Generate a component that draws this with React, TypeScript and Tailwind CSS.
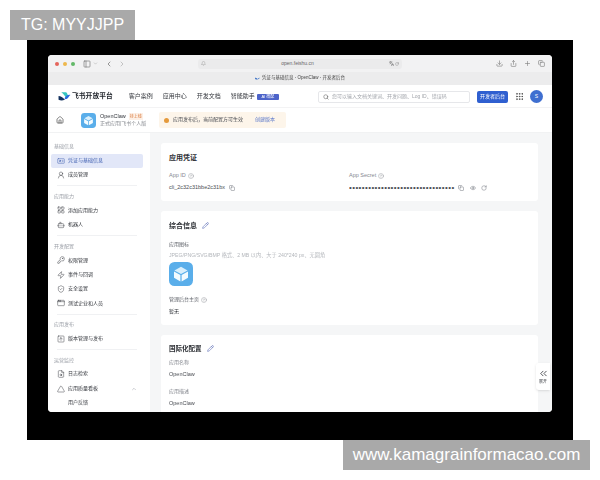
import React from 'react'
import {
  AppWindow, Bell, Bot, ChevronDown, ChevronLeft, ChevronRight, ChevronUp, ChevronsLeft, CircleHelp,
  Copy, Eye, FileSearch, Grip, House, IdCard, KeyRound, LayoutGrid, PanelLeft, Pencil, Plus,
  RotateCw, Search, Share, ShieldCheck, SquareArrowUp, Triangle, UserRound, Download, Languages, Zap,
} from 'lucide-react'

const font = "font-['Liberation_Sans','Noto_Sans_CJK_SC',sans-serif]"

type SideItem = { label: string; icon?: React.ElementType; active?: boolean; chevron?: boolean }
type SideGroup = { title: string; items: SideItem[] }

const groups: SideGroup[] = [
  { title: '基础信息', items: [{ label: '凭证与基础信息', icon: IdCard, active: true }, { label: '成员管理', icon: UserRound }] },
  { title: '应用能力', items: [{ label: '添加应用能力', icon: LayoutGrid }, { label: '机器人', icon: Bot }] },
  {
    title: '开发配置',
    items: [
      { label: '权限管理', icon: KeyRound },
      { label: '事件与回调', icon: Zap },
      { label: '安全设置', icon: ShieldCheck },
      { label: '测试企业和人员', icon: AppWindow },
    ],
  },
  { title: '应用发布', items: [{ label: '版本管理与发布', icon: SquareArrowUp }] },
  {
    title: '运营监控',
    items: [
      { label: '日志检索', icon: FileSearch },
      { label: '应用质量看板', icon: Triangle, chevron: true },
      { label: '用户反馈' },
    ],
  },
]

const Cube = ({ size }: { size: number }) => (
  <svg width={size} height={size} viewBox="0 0 24 24" className="block">
    <rect width="24" height="24" rx="5.5" fill="#5aaeea" />
    <path d="M12 4.8 18.6 8.4 12 12 5.4 8.4Z" fill="#d9effc" />
    <path d="M5 9.4 11.4 13v6.4L5 15.8Z" fill="#f4fbff" />
    <path d="M19 9.4 12.6 13v6.4l6.4-3.6Z" fill="#f4fbff" />
  </svg>
)

const Logo = () => (
  <svg width="13" height="11" viewBox="0 0 24 20" className="block shrink-0">
    <path d="M1 9c4 0 8 3 11 6 2-1 4-3 5-5-3 7-10 9-16 6Z" fill="#12315f" />
    <path d="M6 2h9c2 2 3 4 3.500 7-1 1-2 3-3.500 4C13 9 10 5 6 2Z" fill="#35c6c0" />
    <path d="M12 13c3-5 7-7 11-6-2 1-3 3-4 5-2 3-5 4-7 1Z" fill="#2a6be0" />
  </svg>
)

function Sidebar() {
  return (
    <aside className="w-[102px] shrink-0 bg-white pl-[3px] pr-[7px] pt-[9px] flex flex-col overflow-hidden">
      {groups.map((g, i) => (
        <div key={g.title} className="shrink-0">
          {i > 0 && <div className="h-px bg-[#f0f1f3] mx-[6px] mt-[3px] mb-[5.500px]" />}
          <div className="h-[8px] leading-[8px] pl-[3px] mb-[3.500px] text-[5px] text-[#9a9ea6]">{g.title}</div>
          {g.items.map(item => {
            const Icon = item.icon
            return (
              <div
                key={item.label}
                className={`h-[14.400px] flex items-center pl-[6px] pr-[6px] gap-[3px] text-[5px] ${
                  item.active ? 'bg-[#e2e7f8] text-[#3f5fb0] rounded-[2px]' : 'text-[#33363c]'
                }`}
              >
                {Icon ? <Icon size={8} strokeWidth={1.400} className="shrink-0" /> : <span className="w-[8px] shrink-0" />}
                <span className="flex-1 whitespace-nowrap">{item.label}</span>
                {item.chevron && <ChevronUp size={6} className="text-[#9a9ea6]" />}
              </div>
            )
          })}
        </div>
      ))}
    </aside>
  )
}

function Help() {
  return <CircleHelp size={6} strokeWidth={1.400} className="text-[#777b83] shrink-0" />
}

function Content() {
  return (
    <main className="flex-1 bg-[#f5f6f7] pl-[11px] pr-[14px] pt-[10px] flex flex-col gap-[10px] overflow-hidden">
      <section className="h-[58px] shrink-0 bg-white rounded-[3px] pl-[8px] pt-[10px]">
        <h2 className="text-[7px] leading-[9px] font-bold text-[#2b2e33]">应用凭证</h2>
        <div className="flex mt-[10px]">
          <div className="w-[180px]">
            <div className="flex items-center gap-[2px] text-[5.500px] leading-[7px] text-[#85888f]">App ID <Help /></div>
            <div className="flex items-center gap-[4px] mt-[5px] text-[5.500px] leading-[7px] text-[#4a4d53]">
              cli_2c32c31bbe2c31bx <Copy size={6} className="text-[#777b83]" />
            </div>
          </div>
          <div>
            <div className="flex items-center gap-[2px] text-[5.500px] leading-[7px] text-[#85888f]">App Secret <Help /></div>
            <div className="flex items-center mt-[5px] h-[7px] text-[#4a4d53]">
              <span className="w-[106px] overflow-hidden whitespace-nowrap text-[8px] leading-[7px] tracking-[0.400px]">
                •••••••••••••••••••••••••••••••••
              </span>
              <Copy size={6} className="text-[#777b83] ml-[3px]" />
              <Eye size={6} className="text-[#777b83] ml-[6px]" />
              <RotateCw size={6} className="text-[#777b83] ml-[5px]" />
            </div>
          </div>
        </div>
      </section>

      <section className="h-[114px] shrink-0 bg-white rounded-[3px] pl-[8px] pt-[10px]">
        <div className="flex items-center gap-[5px]">
          <h2 className="text-[7px] leading-[9px] font-bold text-[#2b2e33]">综合信息</h2>
          <Pencil size={7} className="text-[#5a6bb5]" />
        </div>
        <div className="text-[5px] leading-[7px] text-[#5f6269] mt-[11px]">应用图标</div>
        <div className="text-[5.200px] leading-[7px] text-[#b3b6bb] mt-[4px] whitespace-nowrap">
          JPEG/PNG/SVG/BMP 格式、2 MB 以内、大于 240*240 px、无圆角
        </div>
        <div className="mt-[3px]"><Cube size={24} /></div>
        <div className="flex items-center gap-[2px] text-[5px] leading-[7px] text-[#5f6269] mt-[10px]">管理后台主页 <Help /></div>
        <div className="text-[5px] leading-[7px] text-[#33363c] mt-[5px]">暂无</div>
      </section>

      <section className="flex-1 min-h-0 bg-white rounded-t-[3px] pl-[8px] pt-[9px] overflow-hidden">
        <div className="flex items-center gap-[5px]">
          <h2 className="text-[6.500px] leading-[9px] font-bold text-[#2b2e33]">国际化配置</h2>
          <Pencil size={7} className="text-[#5a6bb5]" />
        </div>
        <div className="text-[5px] leading-[7px] text-[#85888f] mt-[6px]">应用名称</div>
        <div className="text-[5.500px] leading-[7px] text-[#4a4d53] mt-[5px]">OpenClaw</div>
        <div className="text-[5px] leading-[7px] text-[#85888f] mt-[9.500px]">应用描述</div>
        <div className="text-[5.500px] leading-[7px] text-[#4a4d53] mt-[5px]">OpenClaw</div>
      </section>
    </main>
  )
}

export default function App() {
  return (
    <div className={`relative w-[600px] h-[480px] bg-white overflow-hidden ${font}`}>
      <div className="absolute left-[10px] top-[10px] w-[125px] h-[30px] z-10 bg-[#a9a9a9] text-white text-[16px] flex items-center justify-center">
        TG: MYYJJPP
      </div>
      <div className="absolute left-[343px] top-[440px] w-[247px] h-[30px] z-10 bg-[#a9a9a9] text-white text-[17px] flex items-center justify-center whitespace-nowrap">
        www.kamagrainformacao.com
      </div>

      <div className="pt-[40px] pl-[27px]">
        <div className="w-[546px] h-[400px] bg-black pt-[15px] pl-[21px]">
          <div className="relative w-[504px] h-[357px] rounded-[4px] overflow-hidden bg-white flex flex-col blur-[0.4px]">
            {/* browser chrome */}
            <div className="h-[17px] bg-[#f2f2f3] flex items-center pl-[7px] pr-[7px] shrink-0">
              <span className="w-[4px] h-[4px] rounded-full bg-[#e5655c]" />
              <span className="w-[4px] h-[4px] rounded-full bg-[#eeb84c] ml-[4px]" />
              <span className="w-[4px] h-[4px] rounded-full bg-[#62b968] ml-[4px]" />
              <PanelLeft size={8} className="text-[#777] ml-[8px]" />
              <ChevronDown size={5} className="text-[#999] ml-[2px]" />
              <ChevronLeft size={8} className="text-[#666] ml-[7px]" />
              <ChevronRight size={8} className="text-[#aaa] ml-[5px]" />
              <div className="w-[204px] h-[10px] ml-[72px] rounded-[3px] bg-[#ebebec] flex items-center px-[3px] text-[5px] text-[#666] shrink-0">
                <Bell size={5} className="text-[#999]" />
                <span className="flex-1 text-center">open.feishu.cn</span>
                <Languages size={5} className="text-[#555]" />
                <RotateCw size={4} className="text-[#777] ml-[1px]" />
              </div>
              <div className="flex-1 flex justify-end items-center gap-[7px] text-[#777]">
                <Download size={7} />
                <Share size={7} />
                <Plus size={7} />
                <Copy size={7} />
              </div>
            </div>
            <div className="h-[13px] bg-[#ececed] flex items-center justify-center gap-[2px] text-[4.500px] text-[#444] shrink-0">
              <span className="w-[5px] h-[5px] shrink-0"><svg viewBox="0 0 24 20" className="block"><path d="M1 9c4 0 8 3 11 6 4-2 7-6 11-8-2 6-8 12-22 9Z" fill="#1f5fc0" /></svg></span>
              凭证与基础信息 - OpenClaw - 开发者后台
            </div>

            {/* site header */}
            <div className="h-[23px] flex items-center pl-[10px] pr-[9px] pt-[1px] border-b border-[#f3f3f4] shrink-0">
              <Logo />
              <span className="ml-[1px] text-[6.800px] font-bold text-[#20242b] whitespace-nowrap">飞书开放平台</span>
              <nav className="flex items-center gap-[10px] ml-[16px] text-[6px] text-[#33363c] whitespace-nowrap">
                <span>客户案例</span>
                <span>应用中心</span>
                <span>开发文档</span>
                <span className="flex items-center gap-[2px]">
                  智能助手
                  <span className="w-[22px] text-center bg-[#4c63c9] text-white text-[4px] leading-[6px] rounded-[1px]">AI 搭配</span>
                </span>
              </nav>
              <div className="ml-auto w-[152px] h-[12px] border border-[#e6e7ea] rounded-[2px] flex items-center px-[4px] gap-[3px] shrink-0">
                <Search size={6} className="text-[#555]" />
                <span className="text-[5px] text-[#a3a6ac] whitespace-nowrap">您可以输入文档关键词、开发问题、Log ID、错误码</span>
              </div>
              <button className="ml-[7px] w-[31px] h-[12px] rounded-[2px] bg-[#2f5fd0] text-white text-[5px] shrink-0">开发者后台</button>
              <Grip size={9} className="ml-[7px] text-[#444] shrink-0" />
              <span className="ml-[6px] w-[13px] h-[13px] rounded-full bg-[#3f6fd0] text-white text-[5px] flex items-center justify-center shrink-0">S</span>
            </div>

            {/* app bar */}
            <div className="h-[25px] flex items-center pl-[8px] border-b border-[#f1f2f3] shrink-0">
              <House size={8} className="text-[#444]" />
              <div className="ml-[17px]"><Cube size={15} /></div>
              <div className="ml-[4px] w-[45px]">
                <div className="flex items-center gap-[3px] text-[5.500px] leading-[7px] text-[#33363c]">
                  OpenClaw <span className="text-[4px] text-[#d9793c] bg-[#fdf0e6] px-[1px]">待上线</span>
                </div>
                <div className="text-[5px] leading-[7px] text-[#8a8d93] whitespace-nowrap">正式应用|飞书个人版</div>
              </div>
              <div className="ml-[14px] w-[127px] h-[16px] rounded-[2px] bg-[#fdf5ea] flex items-center pl-[5px] text-[5px] text-[#4a4d53] whitespace-nowrap">
                <span className="w-[5px] h-[5px] rounded-full bg-[#e59a3c] mr-[4px] shrink-0" />
                应用发布后，当前配置方可生效
                <span className="ml-[12px] text-[#5a77c9]">创建版本</span>
              </div>
            </div>

            <div className="flex-1 flex min-h-0">
              <Sidebar />
              <Content />
            </div>

            {/* expand tab */}
            <div className="absolute right-[2px] top-[308px] w-[14px] h-[27px] bg-white rounded-l-[3px] shadow-sm flex flex-col items-center justify-center text-[#33363c]">
              <ChevronsLeft size={11} strokeWidth={1.800} />
              <span className="text-[4px] leading-[6px]">展开</span>
            </div>
          </div>
        </div>
      </div>
    </div>
  )
}
